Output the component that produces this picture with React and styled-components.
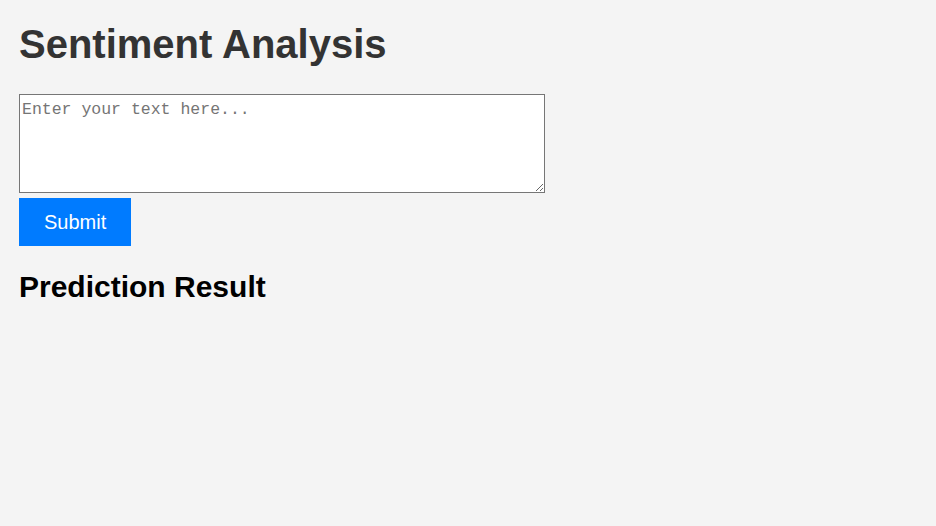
import React from "react";
import styled, { createGlobalStyle } from "styled-components";

const Global = createGlobalStyle`
  html, body { margin: 0; padding: 0; background: #f4f4f4; }
  body { font-family: "Liberation Sans", Arial, sans-serif; }
`;

const Page = styled.main`
  padding: 21px 19px;
  display: flex;
  flex-direction: column;
  align-items: flex-start;
`;

const Title = styled.h1`
  margin: 0 0 27px 0;
  font-size: 40px;
  line-height: 46px;
  font-weight: 700;
  color: #333;
`;

const Form = styled.form`
  display: flex;
  flex-direction: column;
  align-items: flex-start;
  gap: 5px;
`;

const TextArea = styled.textarea`
  box-sizing: border-box;
  width: 526px;
  height: 99px;
  margin: 0;
  padding: 5px 2px 2px;
  border: 1px solid #767676;
  background: #fff;
  font-family: "Liberation Mono", "DejaVu Sans Mono", monospace;
  font-size: 16.5px;
  color: #222;
  resize: both;
  &::placeholder { color: #757575; }
`;

const Button = styled.button`
  box-sizing: border-box;
  height: 48px;
  padding: 0 25px;
  border: none;
  background: #007bff;
  color: #fff;
  font-family: "Liberation Sans", Arial, sans-serif;
  font-size: 20px;
  cursor: pointer;
`;

const Subtitle = styled.h2`
  margin: 24px 0 0 0;
  font-size: 30px;
  line-height: 34px;
  font-weight: 700;
  color: #000;
`;

export default function App() {
  return (
    <>
      <Global />
      <Page>
        <Title>Sentiment Analysis</Title>
        <Form onSubmit={(e) => e.preventDefault()}>
          <TextArea placeholder="Enter your text here..." />
          <Button type="submit">Submit</Button>
        </Form>
        <Subtitle>Prediction Result</Subtitle>
      </Page>
    </>
  );
}
